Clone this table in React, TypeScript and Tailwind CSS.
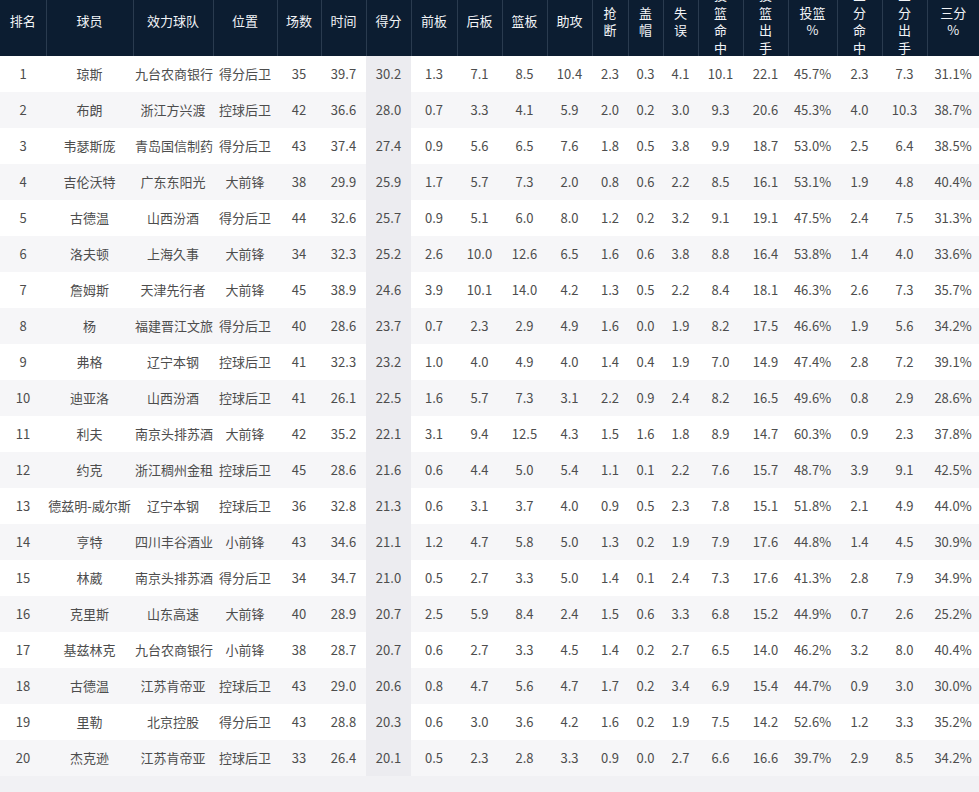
const headers: string[][] = [
  ['排名'],
  ['球员'],
  ['效力球队'],
  ['位置'],
  ['场数'],
  ['时间'],
  ['得分'],
  ['前板'],
  ['后板'],
  ['篮板'],
  ['助攻'],
  ['抢', '断'],
  ['盖', '帽'],
  ['失', '误'],
  ['投', '篮', '命', '中'],
  ['投', '篮', '出', '手'],
  ['投篮', '%'],
  ['三', '分', '命', '中'],
  ['三', '分', '出', '手'],
  ['三分', '%']
]

const colWidths = [
  'w-[46px]',
  'w-[87px]',
  'w-[80px]',
  'w-[64px]',
  'w-[44px]',
  'w-[45px]',
  'w-[45px]',
  'w-[46px]',
  'w-[45px]',
  'w-[45px]',
  'w-[45px]',
  'w-[36px]',
  'w-[35px]',
  'w-[35px]',
  'w-[45px]',
  'w-[45px]',
  'w-[49px]',
  'w-[45px]',
  'w-[45px]',
  'w-[52px]'
]

const raw = `1 琼斯 九台农商银行 得分后卫 35 39.7 30.2 1.3 7.1 8.5 10.4 2.3 0.3 4.1 10.1 22.1 45.7% 2.3 7.3 31.1%
2 布朗 浙江方兴渡 控球后卫 42 36.6 28.0 0.7 3.3 4.1 5.9 2.0 0.2 3.0 9.3 20.6 45.3% 4.0 10.3 38.7%
3 韦瑟斯庞 青岛国信制药 得分后卫 43 37.4 27.4 0.9 5.6 6.5 7.6 1.8 0.5 3.8 9.9 18.7 53.0% 2.5 6.4 38.5%
4 吉伦沃特 广东东阳光 大前锋 38 29.9 25.9 1.7 5.7 7.3 2.0 0.8 0.6 2.2 8.5 16.1 53.1% 1.9 4.8 40.4%
5 古德温 山西汾酒 得分后卫 44 32.6 25.7 0.9 5.1 6.0 8.0 1.2 0.2 3.2 9.1 19.1 47.5% 2.4 7.5 31.3%
6 洛夫顿 上海久事 大前锋 34 32.3 25.2 2.6 10.0 12.6 6.5 1.6 0.6 3.8 8.8 16.4 53.8% 1.4 4.0 33.6%
7 詹姆斯 天津先行者 大前锋 45 38.9 24.6 3.9 10.1 14.0 4.2 1.3 0.5 2.2 8.4 18.1 46.3% 2.6 7.3 35.7%
8 杨 福建晋江文旅 得分后卫 40 28.6 23.7 0.7 2.3 2.9 4.9 1.6 0.0 1.9 8.2 17.5 46.6% 1.9 5.6 34.2%
9 弗格 辽宁本钢 控球后卫 41 32.3 23.2 1.0 4.0 4.9 4.0 1.4 0.4 1.9 7.0 14.9 47.4% 2.8 7.2 39.1%
10 迪亚洛 山西汾酒 控球后卫 41 26.1 22.5 1.6 5.7 7.3 3.1 2.2 0.9 2.4 8.2 16.5 49.6% 0.8 2.9 28.6%
11 利夫 南京头排苏酒 大前锋 42 35.2 22.1 3.1 9.4 12.5 4.3 1.5 1.6 1.8 8.9 14.7 60.3% 0.9 2.3 37.8%
12 约克 浙江稠州金租 控球后卫 45 28.6 21.6 0.6 4.4 5.0 5.4 1.1 0.1 2.2 7.6 15.7 48.7% 3.9 9.1 42.5%
13 德兹明-威尔斯 辽宁本钢 控球后卫 36 32.8 21.3 0.6 3.1 3.7 4.0 0.9 0.5 2.3 7.8 15.1 51.8% 2.1 4.9 44.0%
14 亨特 四川丰谷酒业 小前锋 43 34.6 21.1 1.2 4.7 5.8 5.0 1.3 0.2 1.9 7.9 17.6 44.8% 1.4 4.5 30.9%
15 林葳 南京头排苏酒 得分后卫 34 34.7 21.0 0.5 2.7 3.3 5.0 1.4 0.1 2.4 7.3 17.6 41.3% 2.8 7.9 34.9%
16 克里斯 山东高速 大前锋 40 28.9 20.7 2.5 5.9 8.4 2.4 1.5 0.6 3.3 6.8 15.2 44.9% 0.7 2.6 25.2%
17 基兹林克 九台农商银行 小前锋 38 28.7 20.7 0.6 2.7 3.3 4.5 1.4 0.2 2.7 6.5 14.0 46.2% 3.2 8.0 40.4%
18 古德温 江苏肯帝亚 控球后卫 43 29.0 20.6 0.8 4.7 5.6 4.7 1.7 0.2 3.4 6.9 15.4 44.7% 0.9 3.0 30.0%
19 里勒 北京控股 得分后卫 43 28.8 20.3 0.6 3.0 3.6 4.2 1.6 0.2 1.9 7.5 14.2 52.6% 1.2 3.3 35.2%
20 杰克逊 江苏肯帝亚 控球后卫 33 26.4 20.1 0.5 2.3 2.8 3.3 0.9 0.0 2.7 6.6 16.6 39.7% 2.9 8.5 34.2%`

const rows = raw.split('\n').map((line) => line.split(' '))

// 得分 is the sorted column
const SORT_COL = 6

export default function App() {
  return (
    <div className="w-[979px] h-[792px] overflow-hidden bg-[#f1f1f4] font-['Noto_Sans_CJK_SC','Microsoft_YaHei',sans-serif]">
      <table className="table-fixed w-[979px] border-collapse -mt-[14px]">
        <colgroup>
          {colWidths.map((w, i) => (
            <col key={i} className={w} />
          ))}
        </colgroup>
        <thead>
          <tr className="h-[70px] bg-[#0c1d31]">
            {headers.map((lines, i) => (
              <th
                key={i}
                className="p-0 font-normal text-[13px] leading-[17.5px] text-[#f2f4f7] text-center align-middle border-r border-[#2a3b4f] last:border-r-0"
              >
                {lines.map((l, j) => (
                  <div key={j}>{l}</div>
                ))}
              </th>
            ))}
          </tr>
        </thead>
        <tbody>
          {rows.map((cells, r) => (
            <tr
              key={r}
              className={r % 2 === 0 ? 'h-[36px] bg-white' : 'h-[36px] bg-[#f6f6f8]'}
            >
              {cells.map((c, i) => (
                <td
                  key={i}
                  className={
                    i === SORT_COL
                      ? 'p-0 text-center align-middle text-[13px] text-[#4d4d4d] whitespace-nowrap overflow-hidden bg-[#ececf0]'
                      : 'px-[2px] py-0 text-center align-middle text-[13px] text-[#4d4d4d] whitespace-nowrap overflow-hidden'
                  }
                >
                  {c}
                </td>
              ))}
            </tr>
          ))}
        </tbody>
      </table>
    </div>
  )
}
